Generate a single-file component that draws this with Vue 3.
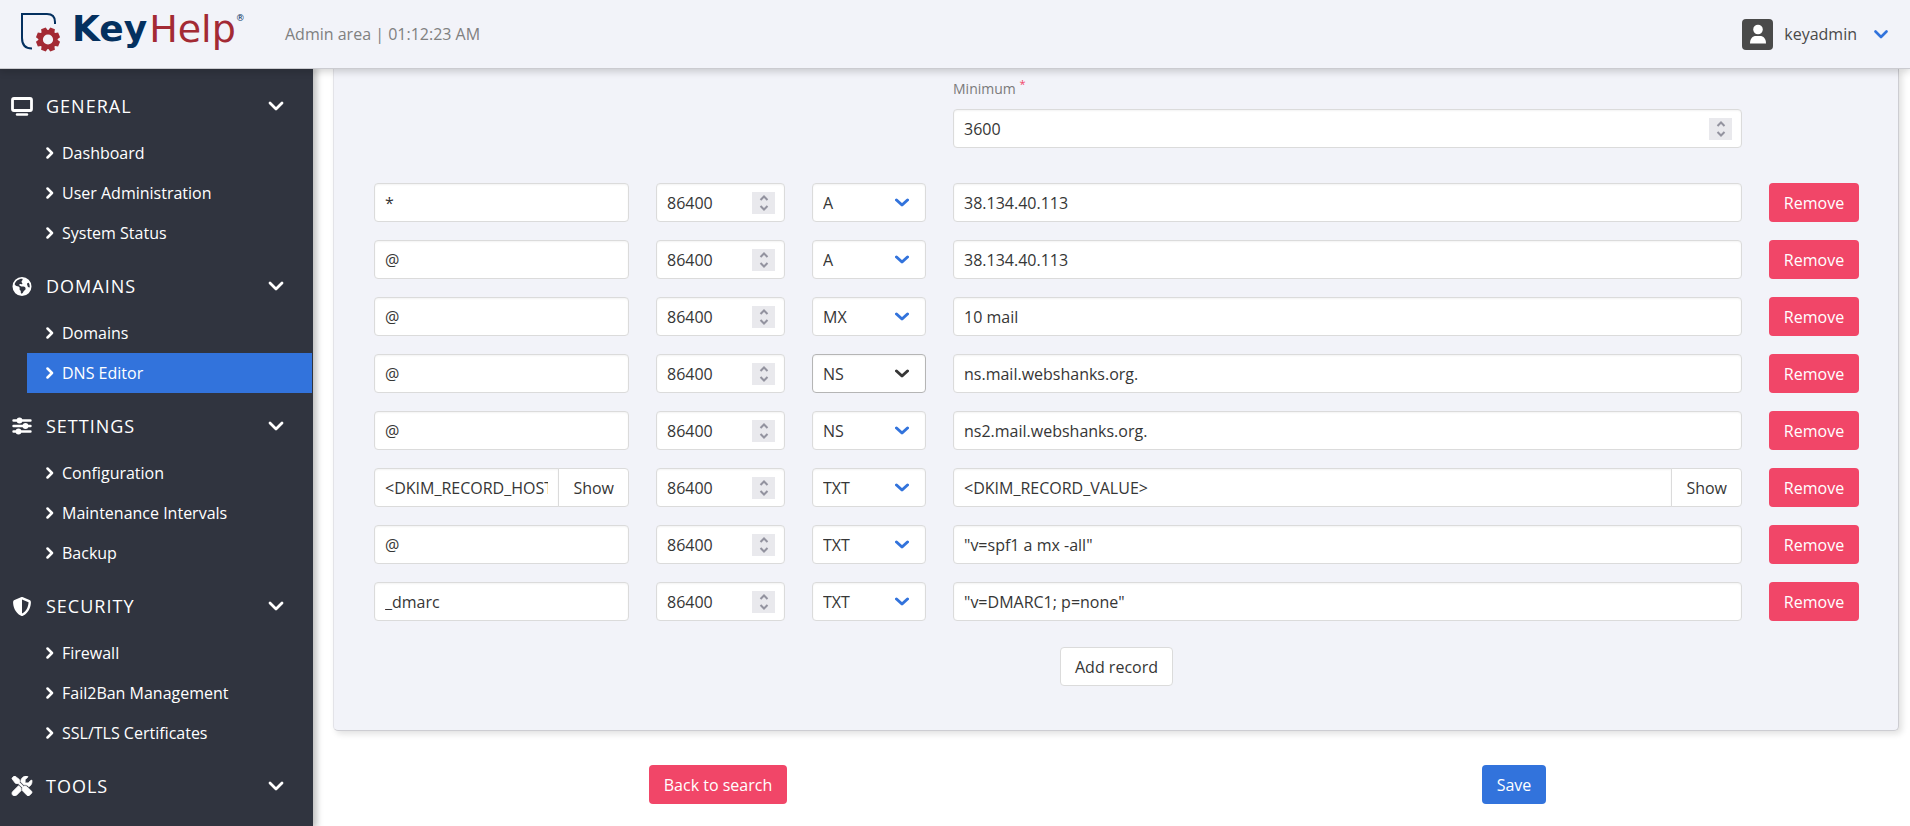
<script setup>
import { ref } from 'vue'

const sections = ref([
  { title: 'GENERAL', icon: 'monitor', items: ['Dashboard', 'User Administration', 'System Status'] },
  { title: 'DOMAINS', icon: 'globe', items: ['Domains', 'DNS Editor'] },
  { title: 'SETTINGS', icon: 'sliders', items: ['Configuration', 'Maintenance Intervals', 'Backup'] },
  { title: 'SECURITY', icon: 'shield', items: ['Firewall', 'Fail2Ban Management', 'SSL/TLS Certificates'] },
  { title: 'TOOLS', icon: 'tools', items: ['Backend'] }
])
const active = 'DNS Editor'

const types = ['A', 'AAAA', 'CAA', 'CNAME', 'MX', 'NS', 'SRV', 'TXT']
const minimum = ref(3600)
const records = ref([
  { id: 1, host: '*', ttl: 86400, type: 'A', value: '38.134.40.113' },
  { id: 2, host: '@', ttl: 86400, type: 'A', value: '38.134.40.113' },
  { id: 3, host: '@', ttl: 86400, type: 'MX', value: '10 mail' },
  { id: 4, host: '@', ttl: 86400, type: 'NS', value: 'ns.mail.webshanks.org.', hovered: true },
  { id: 5, host: '@', ttl: 86400, type: 'NS', value: 'ns2.mail.webshanks.org.' },
  { id: 6, host: '<DKIM_RECORD_HOST>', ttl: 86400, type: 'TXT', value: '<DKIM_RECORD_VALUE>', dkim: true },
  { id: 7, host: '@', ttl: 86400, type: 'TXT', value: '"v=spf1 a mx -all"' },
  { id: 8, host: '_dmarc', ttl: 86400, type: 'TXT', value: '"v=DMARC1; p=none"' }
])
let nextId = 9
const addRecord = () => records.value.push({ id: nextId++, host: '', ttl: 86400, type: 'A', value: '' })
const removeRecord = (id) => { records.value = records.value.filter((r) => r.id !== id) }

const teeth = [22.5, 67.5, 112.5, 157.5, 202.5, 247.5, 292.5, 337.5]
</script>

<template>
  <div class="page">
    <header class="topbar">
      <a class="brand" href="#" aria-label="KeyHelp">
        <svg class="brand-mark" width="42" height="42" viewBox="0 0 42 42" aria-hidden="true">
          <path d="M35 13V11Q35 3 27 3H2V27Q2 37.500 12 37.500" fill="none" stroke="#04305f" stroke-width="2" />
          <g fill="#a32a34">
            <path v-for="a in teeth" :key="a" d="M24 22.500L25.500 16.500H30.500L32 22.500Z" :transform="`rotate(${a} 28 28.500)`" />
          </g>
          <circle cx="28" cy="28.500" r="7.300" fill="#f2f3f9" stroke="#a32a34" stroke-width="4.400" />
        </svg>
        <span class="brand-key">Key</span><span class="brand-help">Help</span><span class="brand-reg">®</span>
      </a>
      <span class="area">Admin area | 01:12:23 AM</span>
      <button class="user" type="button">
        <svg width="31" height="31" viewBox="0 0 31 31" aria-hidden="true">
          <rect width="31" height="31" rx="4" fill="#4a4a4a" />
          <circle cx="16" cy="10.500" r="4.800" fill="#fff" />
          <path d="M8 24.500C8 19.500 10.500 17 14 17H18C21.500 17 24 19.500 24 24.500Z" fill="#fff" />
        </svg>
        <span class="user-name">keyadmin</span>
        <svg width="14" height="9" viewBox="0 0 14 9" aria-hidden="true">
          <path d="M1.500 1.500L7 7L12.500 1.500" fill="none" stroke="#3273dc" stroke-width="2.600" stroke-linecap="round" stroke-linejoin="round" />
        </svg>
      </button>
    </header>

    <div class="body">
      <nav class="sidebar" aria-label="Main menu">
        <section v-for="s in sections" :key="s.title" class="group">
          <button class="group-title" type="button">
            <svg v-if="s.icon === 'monitor'" class="group-icon" viewBox="0 0 22 19" width="22" height="19" aria-hidden="true">
              <rect x="1.500" y="1.500" width="19" height="12" rx="1.500" fill="none" stroke="#fff" stroke-width="2.800" />
              <path d="M6 17.500H16" stroke="#fff" stroke-width="2.400" stroke-linecap="round" />
            </svg>
            <svg v-else-if="s.icon === 'globe'" class="group-icon" viewBox="0 0 512 512" width="19" height="19" aria-hidden="true">
              <path fill="#fff" fill-rule="evenodd" d="M57.700 193l9.400 16.400c8.300 14.500 21.900 25.200 38 29.800L163 255.700c17.200 4.900 29 20.600 29 38.500v39.900c0 11 6.200 21 16 25.900s16 14.900 16 25.900v39c0 15.600 14.900 26.900 29.900 22.600c16.100-4.600 28.600-17.500 32.700-33.800l2.800-11.200c4.200-16.900 15.200-31.400 30.300-40l8.100-4.600c15-8.500 24.200-24.500 24.200-41.700v-8.300c0-12.700-5.100-24.900-14.100-33.900l-3.900-3.900c-9-9-21.200-14.100-33.900-14.100H257c-11.100 0-22.100-2.900-31.800-8.400l-34.500-19.700c-4.300-2.500-7.600-6.500-9.200-11.200c-3.200-9.600 1.100-20 10.200-24.500l5.900-3c6.600-3.300 14.300-3.900 21.300-1.500l23.200 7.700c8.200 2.700 17.200-.4 21.900-7.500c4.700-7 4.200-16.300-1.200-22.800l-13.600-16.300c-10-12-9.900-29.500 .3-41.300l15.700-18.300c8.800-10.300 10.200-25 3.500-36.700l-2.400-4.200c-3.500-.2-6.900-.3-10.400-.3C163.100 48 84.400 108.900 57.700 193zM464 256c0-36.800-9.600-71.400-26.400-101.500L412 164.800c-15.700 6.300-23.800 23.800-18.500 39.800l16.900 50.700c3.500 10.400 12 18.300 22.600 20.900l29.100 7.300c1.200-9 1.800-18.200 1.800-27.500zM0 256a256 256 0 1 1 512 0A256 256 0 1 1 0 256z" />
            </svg>
            <svg v-else-if="s.icon === 'sliders'" class="group-icon" viewBox="0 0 20 18" width="20" height="18" aria-hidden="true">
              <path d="M1.500 3.500H18.500M1.500 9H18.500M1.500 14.500H18.500" stroke="#fff" stroke-width="2.400" stroke-linecap="round" />
              <g fill="#fff"><circle cx="7.500" cy="3.500" r="2.900" /><circle cx="13.500" cy="9" r="2.900" /><circle cx="6.500" cy="14.500" r="2.900" /></g>
            </svg>
            <svg v-else-if="s.icon === 'shield'" class="group-icon" viewBox="0 0 512 512" width="19" height="19" aria-hidden="true">
              <path fill="#fff" fill-rule="evenodd" d="M256 0c4.600 0 9.200 1 13.400 2.900L457.700 82.800c22 9.300 38.400 31 38.300 57.200c-.5 99.200-41.300 280.700-213.600 363.200c-16.700 8-36.100 8-52.800 0C57.300 420.700 16.500 239.200 16 140c-.1-26.200 16.300-47.900 38.300-57.200L242.700 2.900C246.800 1 251.400 0 256 0zm0 66.800V444.800C394 378 431.100 230.100 432 141.400L256 66.800z" />
            </svg>
            <svg v-else class="group-icon" viewBox="0 0 512 512" width="20" height="20" aria-hidden="true">
              <path fill="#fff" fill-rule="evenodd" d="M78.600 5C69.100-2.400 55.600-1.500 47 7L7 47c-8.500 8.500-9.400 22-2.100 31.600l80 104c4.500 5.900 11.600 9.400 19 9.400h54.100l109 109c-14.700 29-10 65.400 14.300 89.600l112 112c12.500 12.500 32.800 12.500 45.300 0l64-64c12.500-12.500 12.500-32.800 0-45.300l-112-112c-24.200-24.200-60.600-29-89.600-14.300l-109-109V104c0-7.500-3.500-14.500-9.400-19L78.600 5zM19.900 396.100C7.200 408.800 0 426.100 0 444.100C0 481.600 30.400 512 67.900 512c18 0 35.300-7.200 48-19.900L233.700 374.300c-7.800-20.900-9-43.600-3.600-65.100l-61.700-61.700L19.900 396.100zM512 144c0-10.500-1.100-20.700-3.200-30.500c-2.400-11.200-16.100-14.100-24.200-6l-63.900 63.900c-3 3-7.100 4.700-11.300 4.700H352c-8.800 0-16-7.200-16-16V102.600c0-4.200 1.700-8.300 4.700-11.300l63.900-63.900c8.100-8.100 5.200-21.800-6-24.200C388.700 1.100 378.500 0 368 0C288.500 0 224 64.500 224 144l0 .8 85.300 85.300c36-9.100 75.800 .5 104 28.700L429 274.500c49-23 83-72.800 83-130.500z" stroke="#fff" stroke-width="20" />
            </svg>
            <span class="group-label">{{ s.title }}</span>
            <svg width="16" height="10" viewBox="0 0 16 10" aria-hidden="true">
              <path d="M2 2L8 8L14 2" fill="none" stroke="#fff" stroke-width="2.800" stroke-linecap="round" stroke-linejoin="round" />
            </svg>
          </button>
          <ul class="menu">
            <li v-for="item in s.items" :key="item">
              <a href="#" class="menu-link" :class="{ 'is-active': item === active }">
                <svg width="8" height="12" viewBox="0 0 8 12" aria-hidden="true">
                  <path d="M1.500 1.500L6 6L1.500 10.500" fill="none" stroke="#fff" stroke-width="2.500" stroke-linecap="round" stroke-linejoin="round" />
                </svg>
                <span>{{ item }}</span>
              </a>
            </li>
          </ul>
        </section>
      </nav>

      <main class="content">
        <form @submit.prevent>
          <div class="card">
            <div class="grid">
              <div class="minimum">
                <label class="label" for="minimum">Minimum <sup class="required">*</sup></label>
                <div class="control">
                  <input id="minimum" v-model="minimum" class="input" type="number" />
                  <span class="spinner" aria-hidden="true">
                    <svg width="10" height="16" viewBox="0 0 10 16"><path d="M1.500 5L5 1.500L8.500 5M1.500 11L5 14.500L8.500 11" fill="none" stroke="#93939f" stroke-width="2" /></svg>
                  </span>
                </div>
              </div>
            </div>

            <div class="records">
              <div v-for="r in records" :key="r.id" class="grid">
                <div class="addons">
                  <input v-model="r.host" class="input" type="text" aria-label="Host" />
                  <button v-if="r.dkim" class="button" type="button">Show</button>
                </div>
                <div class="control">
                  <input v-model="r.ttl" class="input" type="number" aria-label="TTL" />
                  <span class="spinner" aria-hidden="true">
                    <svg width="10" height="16" viewBox="0 0 10 16"><path d="M1.500 5L5 1.500L8.500 5M1.500 11L5 14.500L8.500 11" fill="none" stroke="#93939f" stroke-width="2" /></svg>
                  </span>
                </div>
                <div class="control select" :class="{ 'is-hovered': r.hovered }">
                  <select v-model="r.type" class="input" aria-label="Type">
                    <option v-for="t in types" :key="t">{{ t }}</option>
                  </select>
                  <svg class="arrow" width="14" height="9" viewBox="0 0 14 9" aria-hidden="true">
                    <path d="M1.500 2L7 7L12.500 2" fill="none" stroke="currentColor" stroke-width="3" stroke-linecap="round" stroke-linejoin="round" />
                  </svg>
                </div>
                <div class="addons">
                  <input v-model="r.value" class="input" type="text" aria-label="Value" />
                  <button v-if="r.dkim" class="button" type="button">Show</button>
                </div>
                <button class="button is-danger" type="button" @click="removeRecord(r.id)">Remove</button>
              </div>
            </div>

            <div class="add">
              <button class="button" type="button" @click="addRecord">Add record</button>
            </div>
          </div>

          <div class="actions">
            <button class="button is-danger" type="button">Back to search</button>
            <button class="button is-primary" type="submit">Save</button>
          </div>
        </form>
      </main>
    </div>
  </div>
</template>

<style>
html,
body {
  margin: 0;
  background: #fff;
}
</style>

<style scoped>
.page {
  display: flex;
  flex-direction: column;
  height: 100vh;
  overflow: hidden;
  font-family: "Open Sans", "Noto Sans", sans-serif;
  font-size: 16px;
  color: #363636;
}
.page * {
  box-sizing: border-box;
}
button,
input,
select {
  font: inherit;
  color: inherit;
  margin: 0;
}
svg {
  display: block;
  flex: none;
}

.topbar {
  position: relative;
  z-index: 3;
  flex: none;
  display: flex;
  align-items: center;
  height: 69px;
  padding: 0 22px 0 20px;
  background: #f2f3f9;
  border-bottom: 1px solid #cbcbd0;
  box-shadow: 0 2px 8px rgba(10, 10, 10, 0.2);
}
.brand {
  display: flex;
  align-items: flex-start;
  width: 265px;
  height: 46px;
  font-family: "DejaVu Sans", sans-serif;
  font-size: 36px;
  line-height: 36px;
  text-decoration: none;
}
.brand-mark {
  margin-right: 10px;
}
.brand-key {
  font-weight: 700;
  color: #04305f;
}
.brand-help {
  margin-left: 2px;
  font-size: 38px;
  font-weight: 400;
  color: #a32a34;
}
.brand-reg {
  font-size: 9px;
  line-height: 14px;
  color: #04305f;
}
.area {
  flex: 1;
  color: #808080;
}
.user {
  display: flex;
  align-items: center;
  gap: 11px;
  padding: 0;
  border: 0;
  background: none;
  color: #4a4a4a;
}
.user-name {
  margin-right: 6px;
}

.body {
  flex: 1;
  display: flex;
  min-height: 0;
}
.sidebar {
  position: relative;
  z-index: 2;
  flex: none;
  width: 313px;
  padding: 10px 1px 0 0;
  overflow: hidden;
  background: #30343f;
  color: #fff;
  box-shadow: 2px 0 6px 2px rgba(10, 10, 10, 0.25);
}
.group {
  margin-bottom: 6px;
}
.group-title {
  display: flex;
  align-items: center;
  width: 100%;
  height: 54px;
  padding: 0 28px 0 11px;
  border: 0;
  background: none;
  text-align: left;
}
.group-icon {
  width: 22px;
}
.group-label {
  flex: 1;
  margin-left: 13px;
  font-size: 18px;
  letter-spacing: 1px;
}
.menu {
  margin: 0;
  padding: 0 0 0 27px;
  list-style: none;
}
.menu-link {
  display: flex;
  align-items: center;
  gap: 8px;
  height: 40px;
  padding-left: 19px;
  color: #fff;
  text-decoration: none;
}
.menu-link.is-active {
  background: #3273dc;
}

.content {
  flex: 1;
  min-width: 0;
  padding: 0 11px 0 20px;
  overflow: hidden;
}
.card {
  padding: 10px 39px 44px 40px;
  background: #f2f3f9;
  border: 1px solid #cdcdd2;
  border-top: 0;
  border-left-color: #e3e3e8;
  border-radius: 0 0 5px 5px;
  box-shadow: 3px 3px 6px rgba(10, 10, 10, 0.12);
}
.grid {
  display: grid;
  grid-template-columns: 255fr 129fr 114fr 789fr 90px;
  column-gap: 27px;
}
.minimum {
  grid-column: 4;
}
.label {
  display: block;
  margin-bottom: 10px;
  font-size: 14px;
  line-height: 20px;
  color: #7a7a7a;
}
.required {
  font-size: 11px;
  line-height: 0;
  color: #f14668;
}
.control {
  position: relative;
  min-width: 0;
}
.input {
  display: block;
  width: 100%;
  min-width: 0;
  height: 39px;
  padding: 0 10px;
  border: 1px solid #dbdbdb;
  border-radius: 4px;
  background: #fff;
  box-shadow: inset 0 1px 2px rgba(10, 10, 10, 0.05);
  appearance: none;
}
.input[type="number"] {
  appearance: textfield;
}
.input[type="number"]::-webkit-inner-spin-button {
  appearance: none;
  margin: 0;
}
.spinner {
  position: absolute;
  top: 9px;
  right: 10px;
  display: grid;
  place-items: center;
  width: 23px;
  height: 22px;
  background: #e9e9ed;
  pointer-events: none;
}
.select {
  color: #363636;
}
.arrow {
  position: absolute;
  top: 15px;
  right: 17px;
  color: #3273dc;
  pointer-events: none;
}
.is-hovered .input {
  border-color: #b5b5b5;
}
.is-hovered .arrow {
  color: #363636;
}
.addons {
  display: flex;
  min-width: 0;
}
.addons .button {
  flex: none;
  margin-left: -1px;
  border-radius: 0 4px 4px 0;
}
.addons .input:not(:last-child) {
  border-radius: 4px 0 0 4px;
}
.button {
  height: 39px;
  padding: 0 14px;
  border: 1px solid #dbdbdb;
  border-radius: 4px;
  background: #fff;
  text-align: center;
  white-space: nowrap;
}
.button.is-danger {
  border-color: transparent;
  background: #f14668 border-box;
  color: #fff;
}
.grid .button.is-danger {
  padding: 0;
}
.button.is-primary {
  border-color: transparent;
  background: #3273dc border-box;
  color: #fff;
}
.records {
  display: grid;
  gap: 18px;
  margin-top: 35px;
}
.add {
  display: flex;
  justify-content: center;
  margin-top: 26px;
}
.actions {
  display: grid;
  grid-template-columns: 1fr 1fr;
  column-gap: 26px;
  justify-items: center;
  margin-top: 34px;
}
</style>
